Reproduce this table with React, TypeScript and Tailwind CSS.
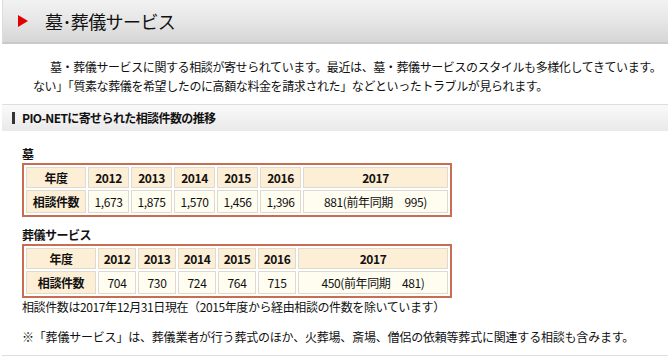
import React from "react";

const YEARS = ["2012", "2013", "2014", "2015", "2016"];

type Row = { title: string; counts: string[]; latest: string; w: number[] };

const TABLES: Row[] = [
  { title: "墓", counts: ["1,673", "1,875", "1,570", "1,456", "1,396"], latest: "881(前年同期　995)", w: [60, 41, 41, 41, 41, 41, 138] },
  { title: "葬儀サービス", counts: ["704", "730", "724", "764", "715"], latest: "450(前年同期　481)", w: [70, 38, 38, 38, 38, 38, 150] },
];

function Tabla({ t }: { t: Row }) {
  return (
    <table className="border-2 border-[#c76e50] border-separate border-spacing-[2px] w-[430px] text-[12px] leading-[16px] tracking-[-0.4px]">
      <tbody>
        <tr className="h-[21px]">
          <th style={{ width: t.w[0] }} className="bg-[#fcefd5] border border-[#dedad0] font-bold text-center p-0">年度</th>
          {YEARS.map((y, i) => (
            <th key={y} style={{ width: t.w[i + 1] }} className="bg-[#fcefd5] border border-[#dedad0] font-bold text-center p-0">{y}</th>
          ))}
          <th className="bg-[#fcefd5] border border-[#dedad0] font-bold text-center p-0">2017</th>
        </tr>
        <tr className="h-[23px]">
          <th className="bg-[#fcefd5] border border-[#dedad0] font-bold text-center p-0">相談件数</th>
          {t.counts.map((c, i) => (
            <td key={i} className="bg-[#fffdf0] border border-[#dedad0] text-center p-0">{c}</td>
          ))}
          <td className="bg-[#fffdf0] border border-[#dedad0] text-center p-0 whitespace-pre">{t.latest}</td>
        </tr>
      </tbody>
    </table>
  );
}

export default function App() {
  return (
    <div className="w-[668px] h-[360px] overflow-hidden bg-white text-[#111] font-['Noto_Sans_CJK_JP',sans-serif]">
      <div className="ml-[2px] h-[44px] flex items-center border-b-2 border-[#c9c9c9] border-l border-l-[#dcdcdc] bg-gradient-to-b from-[#f2f2f2] via-[#e6e6e6] to-[#d6d6d6]">
        <svg width="10" height="12" viewBox="0 0 10 12" className="ml-[15px]">
          <polygon points="0,0 10,6 0,12" fill="#e00000" />
        </svg>
        <span className="ml-[17px] text-[18px] tracking-[-0.6px]">墓･葬儀サービス</span>
      </div>

      <div className="pl-[33px] pt-[13px] text-[12px] leading-[19px] tracking-[-0.4px] whitespace-nowrap">
        <div className="pl-[17px]">墓・葬儀サービスに関する相談が寄せられています。最近は、墓・葬儀サービスのスタイルも多様化してきています。</div>
        <div>ない」「質素な葬儀を希望したのに高額な料金を請求された」などといったトラブルが見られます。</div>
      </div>

      <div className="mt-[9px] ml-[2px] h-[27px] flex items-center border-t border-[#dedede] bg-gradient-to-b from-[#fafafa] to-[#e9e9e9]">
        <span className="ml-[10px] w-[3px] h-[12px] bg-[#333]" />
        <span className="ml-[7px] text-[12px] font-bold tracking-[-0.6px]">PIO-NETに寄せられた相談件数の推移</span>
      </div>

      <div className="pl-[22px]">
        {TABLES.map((t, i) => (
          <div key={t.title} className={i === 0 ? "mt-[14px]" : "mt-[9px]"}>
            <div className="text-[12px] font-bold leading-[18px] tracking-[-0.5px]">{t.title}</div>
            <Tabla t={t} />
          </div>
        ))}
        <div className="text-[12px] leading-[18px] tracking-[-0.4px] whitespace-nowrap">相談件数は2017年12月31日現在（2015年度から経由相談の件数を除いています）</div>
        <div className="mt-[12px] text-[12px] leading-[18px] tracking-[-0.2px] whitespace-nowrap">※「葬儀サービス」は、葬儀業者が行う葬式のほか、火葬場、斎場、僧侶の依頼等葬式に関連する相談も含みます。</div>
      </div>
      <div className="mt-[9px] ml-[2px] border-t border-[#dedede]" />
    </div>
  );
}
